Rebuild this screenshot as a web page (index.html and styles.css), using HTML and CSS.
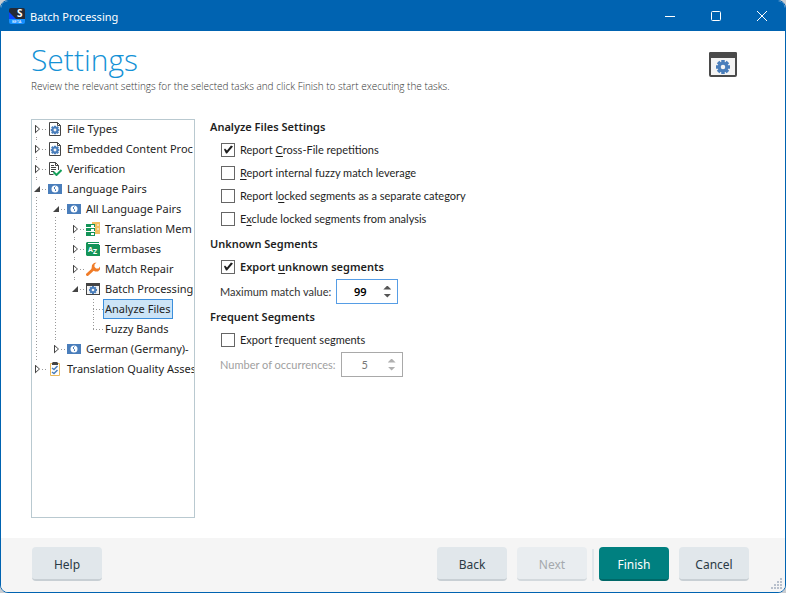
FILE: index.html
```
<!DOCTYPE html>
<html lang="en">
<head>
    <meta charset="UTF-8">
    <meta name="viewport" content="width=device-width, initial-scale=1.0">
    <title>Batch Processing</title>
    <link rel="stylesheet" href="styles.css">
</head>
<body>
    <!-- Shared icons -->
    <svg class="sprite" aria-hidden="true">
        <symbol id="gear" viewBox="0 0 16 16">
            <g fill="#4a7ebb">
                <rect x="6" y="0" width="4" height="16"/>
                <rect x="6" y="0" width="4" height="16" transform="rotate(45 8 8)"/>
                <rect x="6" y="0" width="4" height="16" transform="rotate(90 8 8)"/>
                <rect x="6" y="0" width="4" height="16" transform="rotate(135 8 8)"/>
                <circle cx="8" cy="8" r="6"/>
            </g>
            <circle cx="8" cy="8" r="2.6" fill="#f4f4f4"/>
        </symbol>
        <symbol id="file-gear" viewBox="0 0 14 14">
            <path d="M1.500 0.500h8l3 3v10h-11z" fill="#fff" stroke="#444"/>
            <path d="M9.500 0.500v3h3" fill="none" stroke="#444"/>
            <use href="#gear" x="2.500" y="3.500" width="9" height="9"/>
        </symbol>
        <symbol id="window-gear" viewBox="0 0 14 14">
            <rect x="0.5" y="1.5" width="13" height="11" fill="#f4f4f4" stroke="#444"/>
            <path d="M0 1h14v3H0z" fill="#444"/>
            <use href="#gear" x="3" y="4" width="8" height="8"/>
        </symbol>
        <symbol id="globe-card" viewBox="0 0 14 10">
            <path d="M0 0h14v10H0z" fill="#4a7ebb"/>
            <circle cx="7" cy="5" r="3.500" fill="#fff"/>
            <path d="M7.500 2.500L6 4l1.500 1.500V7" fill="none" stroke="#4a7ebb"/>
        </symbol>
    </svg>

    <div class="window">
        <header class="titlebar">
            <svg class="app-icon" viewBox="0 0 16 16" aria-hidden="true">
                <path d="M2 0h12a2 2 0 0 1 2 2v9H0V2a2 2 0 0 1 2-2z" fill="#252a35"/>
                <path d="M0 4l7 7H0z" fill="#0b45ff"/>
                <path d="M0 11h16v3a2 2 0 0 1-2 2H2a2 2 0 0 1-2-2z" fill="#1590ff"/>
                <text x="8" y="9" class="app-letter">S</text>
                <text x="3" y="15" class="app-beta">BETA</text>
            </svg>
            <span class="titlebar-text">Batch Processing</span>
            <button class="caption-button" aria-label="Minimize">
                <svg viewBox="0 0 10 10"><path d="M0 5.500h10"/></svg>
            </button>
            <button class="caption-button" aria-label="Maximize">
                <svg viewBox="0 0 10 10"><rect x="0.5" y="0.5" width="9" height="9" rx="1"/></svg>
            </button>
            <button class="caption-button" aria-label="Close">
                <svg viewBox="0 0 10 10"><path d="M0 0l10 10M10 0L0 10"/></svg>
            </button>
        </header>

        <div class="page-header">
            <div>
                <h1>Settings</h1>
                <p>Review the relevant settings for the selected tasks and click Finish to start executing the tasks.</p>
            </div>
            <svg class="page-icon" viewBox="0 0 28 25" aria-hidden="true">
                <rect x="1" y="1" width="26" height="23" rx="1" fill="#f4f4f4" stroke="#4a4a4a" stroke-width="2"/>
                <path d="M1 0h26l1 1v5H0V1z" fill="#4a4a4a"/>
                <use href="#gear" x="7" y="8" width="14" height="14"/>
            </svg>
        </div>

        <main class="content">
            <nav class="tree" aria-label="Settings">
                <ul>
                    <li>
                        <div class="row">
                            <button class="toggle" aria-label="Expand"></button>
                            <svg class="icon" viewBox="0 0 14 14"><use href="#file-gear"/></svg>
                            <a href="#">File Types</a>
                        </div>
                    </li>
                    <li>
                        <div class="row">
                            <button class="toggle" aria-label="Expand"></button>
                            <svg class="icon" viewBox="0 0 14 14"><use href="#file-gear"/></svg>
                            <a href="#">Embedded Content Proc</a>
                        </div>
                    </li>
                    <li>
                        <div class="row">
                            <button class="toggle" aria-label="Expand"></button>
                            <svg class="icon" viewBox="0 0 14 14">
                                <path d="M10.500 8V3.500l-3-3h-6v12h4" fill="#fff" stroke="#444"/>
                                <path d="M7.500 0.500v3h3M3 3.500h3M3 5.500h5M3 7.500h5M3 9.500h3" fill="none" stroke="#444"/>
                                <path d="M5.500 10l3 3L13.500 8" fill="none" stroke="#14a05a" stroke-width="2"/>
                            </svg>
                            <a href="#">Verification</a>
                        </div>
                    </li>
                    <li>
                        <div class="row">
                            <button class="toggle open" aria-label="Collapse"></button>
                            <svg class="icon" viewBox="0 0 14 10"><use href="#globe-card"/></svg>
                            <a href="#">Language Pairs</a>
                        </div>
                        <ul>
                            <li>
                                <div class="row">
                                    <button class="toggle open" aria-label="Collapse"></button>
                                    <svg class="icon" viewBox="0 0 14 10"><use href="#globe-card"/></svg>
                                    <a href="#">All Language Pairs</a>
                                </div>
                                <ul>
                                    <li>
                                        <div class="row">
                                            <button class="toggle" aria-label="Expand"></button>
                                            <svg class="icon" viewBox="0 0 14 14">
                                                <path d="M6 0h8v12H6z" fill="#f2c063"/>
                                                <path d="M11 2h2v2h-2zM11 6h2v2h-2z" fill="#f9dfae"/>
                                                <path d="M0 2h9v12H0z" fill="#149458"/>
                                                <path d="M0 5.500h9M0 9.500h9" stroke="#fff"/>
                                                <path d="M5 3h3v2H5zM5 7h3v2H5zM5 11h3v2H5z" fill="#fff"/>
                                            </svg>
                                            <a href="#">Translation Mem</a>
                                        </div>
                                    </li>
                                    <li>
                                        <div class="row">
                                            <button class="toggle" aria-label="Expand"></button>
                                            <svg class="icon" viewBox="0 0 14 14">
                                                <path d="M1 0h12v3h1v11H1L0 13V1z" fill="#149458"/>
                                                <path d="M2 1.500h11" stroke="#fff"/>
                                                <text x="2" y="10" class="az">A</text>
                                                <text x="7" y="12" class="az">Z</text>
                                            </svg>
                                            <a href="#">Termbases</a>
                                        </div>
                                    </li>
                                    <li>
                                        <div class="row">
                                            <button class="toggle" aria-label="Expand"></button>
                                            <svg class="icon" viewBox="0 0 14 14">
                                                <path d="M1.500 12.500L8 6.500" stroke="#f07c28" stroke-width="3" stroke-linecap="round"/>
                                                <path d="M10.500 0.500L8.500 2.500v3L10 6.500h2.500L14 4.500v3L12 9.500H9L5.500 7l.5-4L8 1z" fill="#f07c28"/>
                                            </svg>
                                            <a href="#">Match Repair</a>
                                        </div>
                                    </li>
                                    <li>
                                        <div class="row">
                                            <button class="toggle open" aria-label="Collapse"></button>
                                            <svg class="icon" viewBox="0 0 14 14"><use href="#window-gear"/></svg>
                                            <a href="#">Batch Processing</a>
                                        </div>
                                        <ul>
                                            <li><div class="row leaf"><a class="selected" href="#">Analyze Files</a></div></li>
                                            <li><div class="row leaf"><a href="#">Fuzzy Bands</a></div></li>
                                        </ul>
                                    </li>
                                </ul>
                            </li>
                            <li>
                                <div class="row">
                                    <button class="toggle" aria-label="Expand"></button>
                                    <svg class="icon" viewBox="0 0 14 10"><use href="#globe-card"/></svg>
                                    <a href="#">German (Germany)-</a>
                                </div>
                            </li>
                        </ul>
                    </li>
                    <li>
                        <div class="row">
                            <button class="toggle" aria-label="Expand"></button>
                            <svg class="icon" viewBox="0 0 14 14">
                                <path d="M2.500 1.500h9v12h-9z" fill="#fff" stroke="#e9b95c"/>
                                <path d="M4 1l1-1h4l1 1v2H4z" fill="#444"/>
                                <path d="M4 6l2 1.500L9.500 4M4 10l2 1.500L9.500 8" fill="none" stroke="#4a7ebb" stroke-width="1.500"/>
                            </svg>
                            <a href="#">Translation Quality Asses</a>
                        </div>
                    </li>
                </ul>
            </nav>

            <form class="settings">
                <h2>Analyze Files Settings</h2>
                <label class="check"><input type="checkbox" checked><span>Report <u>C</u>ross-File repetitions</span></label>
                <label class="check"><input type="checkbox"><span><u>R</u>eport internal fuzzy match leverage</span></label>
                <label class="check"><input type="checkbox"><span>Report l<u>o</u>cked segments as a separate category</span></label>
                <label class="check"><input type="checkbox"><span>E<u>x</u>clude locked segments from analysis</span></label>

                <h2>Unknown Segments</h2>
                <label class="check changed"><input type="checkbox" checked><span>Export <u>u</u>nknown segments</span></label>
                <div class="field">
                    <label for="maxMatch">Maximum match value:</label>
                    <div class="spin changed">
                        <input type="number" id="maxMatch" value="99">
                        <div class="spin-buttons">
                            <button type="button" class="up" aria-label="Increase"></button>
                            <button type="button" class="down" aria-label="Decrease"></button>
                        </div>
                    </div>
                </div>

                <h2>Frequent Segments</h2>
                <label class="check"><input type="checkbox"><span>Export <u>f</u>requent segments</span></label>
                <div class="field disabled">
                    <label for="occurrences">Number of occurrences:</label>
                    <div class="spin">
                        <input type="number" id="occurrences" value="5" disabled>
                        <div class="spin-buttons">
                            <button type="button" class="up" aria-label="Increase" disabled></button>
                            <button type="button" class="down" aria-label="Decrease" disabled></button>
                        </div>
                    </div>
                </div>
            </form>
        </main>

        <footer class="footer">
            <button class="btn help">Help</button>
            <button class="btn">Back</button>
            <button class="btn" disabled>Next</button>
            <div class="finish-group">
                <button class="btn primary">Finish</button>
            </div>
            <button class="btn">Cancel</button>
            <svg class="grip" viewBox="0 0 12 12" aria-hidden="true">
                <path d="M9 1h2M6 4h2M9 4h2M3 7h2M6 7h2M9 7h2M0 10h2M3 10h2M6 10h2M9 10h2" stroke="#b8c0cc" stroke-width="2"/>
            </svg>
        </footer>
    </div>
</body>
</html>
```

FILE: styles.css
```
* {
    box-sizing: border-box;
}
body {
    margin: 0;
    height: 100vh;
    background-color: #c9cdd2;
    font-family: "Noto Sans", "Open Sans", sans-serif;
    font-size: 11px;
    color: #1e1e1e;
}
button, input {
    font: inherit;
    color: inherit;
}
.sprite {
    display: none;
}
.window {
    display: flex;
    flex-direction: column;
    height: 100%;
    border: 1px solid #0063b1;
    border-radius: 8px;
    background-color: white;
    overflow: hidden;
}

/* Title bar */
.titlebar {
    display: flex;
    align-items: center;
    height: 30px;
    padding-left: 8px;
    background-color: #0063b1;
    color: white;
}
.app-icon {
    width: 16px;
    height: 16px;
    margin-right: 5px;
    overflow: visible;
}
.app-letter {
    font-size: 10px;
    font-weight: bold;
    fill: white;
}
.app-beta {
    font-size: 4px;
    fill: white;
}
.titlebar-text {
    flex: 1;
}
.caption-button {
    width: 46px;
    height: 30px;
    padding: 0;
    border: none;
    background: none;
}
.caption-button svg {
    display: block;
    width: 10px;
    height: 10px;
    margin: auto;
    fill: none;
    stroke: white;
    overflow: visible;
}

/* Heading */
.page-header {
    display: flex;
    justify-content: space-between;
    height: 83px;
    padding: 10px 48px 0 30px;
}
h1 {
    margin: 0;
    font-family: "Open Sans", sans-serif;
    font-size: 30px;
    font-weight: 300;
    line-height: 38px;
    color: #1492d6;
}
.page-header p {
    margin: 0;
    font-family: "Open Sans", sans-serif;
    font-size: 10px;
    font-weight: 300;
    line-height: 14px;
    color: #333;
}
.page-icon {
    width: 28px;
    height: 25px;
    margin-top: 11px;
}

/* Content */
.content {
    flex: 1;
    display: flex;
    gap: 15px;
    min-height: 0;
    padding: 0 30px 20px;
}
.tree {
    width: 164px;
    margin-top: 5px;
    outline: 1px solid #b9c9d0;
    outline-offset: -1px;
    overflow: hidden;
}
.tree ul {
    margin: 0;
    padding: 0;
    list-style: none;
}
.tree ul ul {
    padding-left: 19px;
}
.tree li {
    background: repeating-linear-gradient(#999 0 1px, transparent 1px 3px) 5px 0 / 1px 100% no-repeat;
}
.tree li:last-child {
    background-size: 1px 10px;
}
.row {
    display: flex;
    align-items: center;
    height: 20px;
    white-space: nowrap;
}
.toggle {
    flex: none;
    display: flex;
    align-items: center;
    width: 17px;
    height: 14px;
    padding: 0 0 0 4px;
    border: none;
    background: repeating-linear-gradient(90deg, #999 0 1px, transparent 1px 3px) 11px 7px / 5px 1px no-repeat, white;
}
.toggle::before {
    content: "";
    width: 5px;
    height: 9px;
    background-color: #444;
    clip-path: polygon(0 0, 100% 50%, 0 100%, 0 0, 1px 2px, 1px 7px, 4px 50%, 1px 2px);
}
.toggle.open {
    padding-left: 3px;
}
.toggle.open::before {
    width: 6px;
    height: 6px;
    clip-path: polygon(100% 0, 100% 100%, 0 100%);
}
.icon {
    flex: none;
    width: 14px;
    height: 14px;
    margin-right: 3px;
}
.az {
    font-size: 7px;
    font-weight: bold;
    fill: white;
}
.row a {
    padding: 0 2px;
    line-height: 18px;
    color: inherit;
    text-decoration: none;
}
.leaf {
    padding-left: 15px;
    background: repeating-linear-gradient(90deg, #999 0 1px, transparent 1px 3px) 5px 10px / 10px 1px no-repeat;
}
.row .selected {
    padding: 0 1px;
    border: 1px solid #3c8fdc;
    background-color: #cce4f7;
}

/* Settings form */
.settings {
    font-family: Lato, sans-serif;
}
h2 {
    margin: 0;
    font-family: "Noto Sans", sans-serif;
    font-size: 11px;
    font-weight: 600;
    line-height: 25px;
}
.check {
    display: flex;
    align-items: center;
    gap: 5px;
    height: 23px;
    margin-left: 11px;
    padding-bottom: 2px;
}
u {
    text-underline-offset: 2px;
}
.check input {
    appearance: none;
    width: 14px;
    height: 14px;
    margin: 0;
    border: 1px solid #666;
    background-color: white;
}
.check input:checked::before {
    content: "";
    display: block;
    width: 12px;
    height: 12px;
    background-color: #1e1e1e;
    clip-path: polygon(2px 6px, 3px 5px, 5px 7px, 9px 2px, 11px 3px, 5px 10px, 4px 10px);
}
.changed {
    font-family: "Noto Sans", sans-serif;
    font-weight: 600;
}
.field {
    display: flex;
    align-items: center;
    gap: 5px;
    margin-left: 10px;
    color: #333;
}
.spin {
    display: flex;
    width: 62px;
    height: 25px;
    border: 1px solid #a9a9a9;
    background-color: white;
}
.spin.changed {
    border-color: #569de5;
    color: black;
}
.spin input {
    appearance: textfield;
    flex: none;
    width: 46px;
    padding: 0;
    border: none;
    background: none;
    text-align: center;
}
.spin input::-webkit-inner-spin-button {
    appearance: none;
    margin: 0;
}
.spin-buttons {
    display: flex;
    flex-direction: column;
    justify-content: center;
    gap: 4px;
}
.spin-buttons button {
    width: 8px;
    height: 4px;
    padding: 0;
    border: none;
    background-color: #555;
}
.up {
    clip-path: polygon(50% 0, 100% 100%, 0 100%);
}
.down {
    clip-path: polygon(0 0, 100% 0, 50% 100%);
}
.disabled {
    color: #a0a0a0;
}
.disabled input {
    color: #777;
}
.disabled .spin-buttons button {
    background-color: #b0b0b0;
}

/* Footer */
.footer {
    position: relative;
    display: flex;
    gap: 10px;
    height: 54px;
    padding: 9px 36px 0 31px;
    background-color: #f5f5f5;
}
.btn {
    width: 70px;
    height: 34px;
    padding: 2px 0 0;
    border: none;
    border-bottom: 2px solid #c8cfd4;
    border-radius: 4px;
    background-color: #e1e7eb;
    font-size: 12px;
    color: #2b3a45;
}
.btn:disabled {
    border-color: #d3d9dd;
    background-color: #e9edf0;
    color: #a5a9ad;
}
.btn.primary {
    border-color: #006868;
    background-color: #008080;
    color: white;
}
.help {
    margin-right: auto;
}
.finish-group {
    display: flex;
    margin-left: -5px;
    padding-left: 7px;
    background: linear-gradient(#e1e7eb, #e1e7eb) 0 2px / 2px 32px no-repeat;
}
.grip {
    position: absolute;
    right: 2px;
    bottom: 2px;
    width: 12px;
    height: 12px;
}
```
